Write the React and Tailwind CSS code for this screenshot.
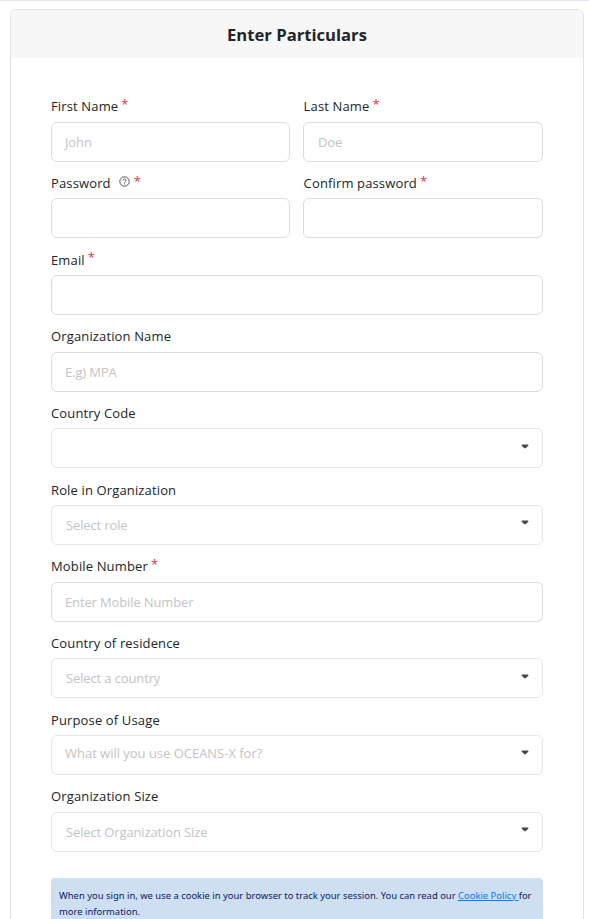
import React from "react";

function Label({ children, required, help, inset }) {
  return (
    <div className={(inset ? "pl-[0.6px] " : "") + "flex h-[26.7px] items-start whitespace-pre pt-[0.35px] text-[13px] leading-[23px] tracking-[0.14px] text-[#212529]"}>
      <span>{children}</span>
      {help && (
        <svg className="ml-2 mt-1" width="11" height="11" viewBox="0 0 11 11" fill="none" stroke="#555" strokeWidth="1">
          <circle cx="5.5" cy="5.5" r="4.7" />
          <path d="M4 4.6c0-2 3-2 3-.2 0 1.1-1.5 1.1-1.5 2.2M5.5 7.4v1" />
        </svg>
      )}
      {required && <span className={help ? "ml-1 -mt-[2.35px] text-[#dc3545]" : "ml-[3px] -mt-[2.35px] text-[#dc3545]"}>*</span>}
    </div>
  );
}

function Field({ label, required, help, text = "", select, raised, wide }) {
  return (
    <div className={wide ? "h-[76.667px] w-[240px]" : "h-[76.667px] min-w-0 flex-1"}>
      <Label required={required} help={help} inset={wide}>{label}</Label>
      <div
        className={
          "flex h-10 items-center justify-between rounded-[6px] border bg-white pr-[13px] text-[13px] text-[#c4c4c4] " +
          (select ? "border-[#e5e5e8] " : "border-[#dcdcdc] ") +
          ((select && !raised) || wide ? "pl-[14px]" : "pl-[13px]")
        }
      >
        <span className={raised ? "pb-[3px] tracking-[-0.02px]" : "pt-[1.6px] tracking-[-0.13px]"}>{text}</span>
        {select && (
          <svg className="mb-1" width="8" height="5" viewBox="0 0 8 5">
            <path d="M1 .5h6l.5 1L4.6 4.3h-1.2L.5 1.5z" fill="#484848" />
          </svg>
        )}
      </div>
    </div>
  );
}

export default function App() {
  return (
    <div className="h-[919px] w-[589px] overflow-hidden border-t border-[#dbe3ec] bg-white px-[10px] pt-2 pr-[5px] font-['Open_Sans',sans-serif]">
      <div className="h-[930px] overflow-hidden rounded-t-[6px] border border-[#e2e2e2]">
        <h1 className="flex h-12 items-center justify-center bg-[#f7f7f7] pt-[2px] text-[16.64px] font-bold text-[#212529]">
          Enter Particulars
        </h1>
        <form className="pl-10 pr-10 pt-[37px]">
          <div className="flex gap-[13px]">
            <Field label="First Name" required text="John" />
            <Field label="Last Name" required text="Doe" wide />
          </div>
          <div className="flex gap-[13px]">
            <Field label="Password" required help />
            <Field label="Confirm password" required wide />
          </div>
          <Field label="Email" required />
          <Field label="Organization Name" text="E.g) MPA" />
          <Field label="Country Code" select />
          <Field label="Role in Organization" text="Select role" select />
          <Field label="Mobile Number" required text="Enter Mobile Number" />
          <Field label="Country of residence" text="Select a country" select />
          <Field label="Purpose of Usage" text="What will you use OCEANS-X for?" select raised />
          <Field label="Organization Size" text="Select Organization Size" select />
          <div className="mt-[16px] h-[60px] whitespace-nowrap rounded-[4px] bg-[#cddff0] px-2 pt-[10px] font-['Noto_Sans',sans-serif] text-[9.44px] leading-4 text-[#0c1a6b]">
            When you sign in, we use a cookie in your browser to track your session. You can read our{" "}
            <a className="text-[#007bff] underline">Cookie Policy </a>for
            <br />
            more information.
          </div>
        </form>
      </div>
    </div>
  );
}
